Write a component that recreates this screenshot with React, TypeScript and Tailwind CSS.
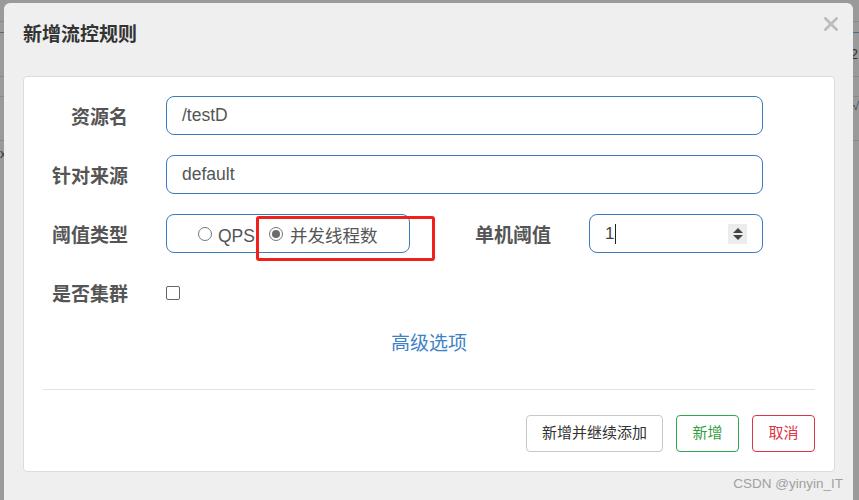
const cjk = "font-['Liberation_Sans','Noto_Sans_CJK_SC',sans-serif]";

export default function App() {
  return (
    <div className={`relative h-[500px] w-[859px] overflow-hidden bg-[#9a9a9a] ${cjk}`}>
      {/* page behind the overlay */}
      <BackdropPage />

      {/* modal */}
      <div className="absolute left-[4px] top-[3px] h-[520px] w-[849px] rounded-[6px] bg-[#efefef]">
        <div className="flex h-[73px] items-center justify-between pl-[19px] pr-[15px] pb-[8px]">
          <h4 className="text-[19px] font-bold text-[#333]">新增流控规则</h4>
          <svg width="14" height="14" viewBox="0 0 14 14" className="mb-[24px]">
            <path d="M1.5 1.5 L12.5 12.5 M12.5 1.5 L1.5 12.5" stroke="#bdbdbd" strokeWidth="2.8" strokeLinecap="square" />
          </svg>
        </div>

        <div className="ml-[19px] mr-[18px] rounded-[4px] border border-[#dcdcdc] bg-white px-[19px] pt-[19px] pb-[19px]">
          <div className="flex flex-col gap-[20px]">
            <Row label="资源名">
              <TextBox value="/testD" />
            </Row>
            <Row label="针对来源">
              <TextBox value="default" />
            </Row>
            <Row label="阈值类型">
              <div className="relative flex h-[39px] w-[244px] items-center rounded-[8px] border border-[#3a7bbf] pl-[31px]">
                <Radio />
                <span className="ml-[6px] pt-[5px] text-[17.5px] text-[#555]">QPS</span>
                <span className="ml-[14px]">
                  <Radio checked />
                </span>
                <span className="ml-[7px] pt-[5px] text-[17.5px] text-[#555]">并发线程数</span>
                {/* red annotation */}
                <div className="absolute left-[89px] top-[1px] h-[45px] w-[179px] rounded-[3px] border-[3px] border-[#f2201b]" />
              </div>
              <div className="ml-[56px] w-[85px] pt-[6px] text-right text-[19px] font-bold text-[#555]">单机阈值</div>
              <div className="ml-[38px] flex h-[39px] w-[174px] items-center rounded-[8px] border border-[#3a7bbf] pl-[15px] pr-[15px]">
                <span className="text-[17px] text-[#444]">1</span>
                <span className="ml-[1px] h-[20px] w-px bg-[#222]" />
                <div className="ml-auto flex h-[20px] w-[19px] flex-col items-center justify-center gap-[2px] bg-[#ececec]">
                  <div className="h-0 w-0 border-x-[5px] border-b-[5px] border-x-transparent border-b-[#444]" />
                  <div className="h-0 w-0 border-x-[5px] border-t-[5px] border-x-transparent border-t-[#444]" />
                </div>
              </div>
            </Row>
            <Row label="是否集群">
              <div className="h-[14px] w-[14px] rounded-[2px] border border-[#666] bg-white" />
            </Row>
          </div>

          <div className="mt-[18px] text-center">
            <span className="text-[19px] text-[#3d82c6]">高级选项</span>
          </div>

          <div className="mt-[30px] border-t border-[#e3e3e3]" />

          <div className="mt-[25px] flex justify-end gap-[13px]">
            <button className="h-[37px] rounded-[4px] border border-[#c8c8c8] bg-white px-[15px] text-[15px] text-[#333]">
              新增并继续添加
            </button>
            <button className="h-[37px] w-[63px] rounded-[4px] border border-[#2fa84f] bg-white text-[15px] text-[#34a044]">
              新增
            </button>
            <button className="h-[37px] w-[63px] rounded-[4px] border border-[#dc3545] bg-white text-[15px] text-[#dc3545]">
              取消
            </button>
          </div>
        </div>
      </div>

      <div className="absolute right-[16px] bottom-[6px] text-[13.5px] text-[#a0a0a0]">CSDN @yinyin_IT</div>
    </div>
  );
}

function Row({ label, children }: { label: string; children: React.ReactNode }) {
  return (
    <div className="flex h-[39px] items-center">
      <div className="w-[85px] pt-[6px] text-right text-[19px] font-bold text-[#555]">{label}</div>
      <div className="ml-[38px] flex items-center">{children}</div>
    </div>
  );
}

function TextBox({ value }: { value: string }) {
  return (
    <div className="flex h-[39px] w-[597px] items-center rounded-[8px] border border-[#3a7bbf] px-[15px] text-[17.5px] text-[#555]">
      {value}
    </div>
  );
}

function Radio({ checked }: { checked?: boolean }) {
  return (
    <div className="flex h-[14px] w-[14px] items-center justify-center rounded-full border border-[#767676] bg-white">
      {checked && <div className="h-[8px] w-[8px] rounded-full bg-[#6b6b6b]" />}
    </div>
  );
}

function BackdropPage() {
  return (
    <div className="flex h-full flex-col">
      <div className="h-[22px] border-b border-[#8a8a8a]" />
      <div className="h-[11px] border-b border-[#4a6a8f]" />
      <div className="flex h-[44px] items-center justify-end border-b border-[#8a8a8a] pr-px text-[14px] text-[#333]">2</div>
      <div className="h-[20px] border-b border-[#8a8a8a]" />
      <div className="h-[21px] items-center text-right text-[12px] text-[#444]">√</div>
      <div className="h-[23px] border-b border-[#8a8a8a]" />
      <div className="flex h-[22px] items-end text-[13px] text-[#333]">x</div>
    </div>
  );
}
